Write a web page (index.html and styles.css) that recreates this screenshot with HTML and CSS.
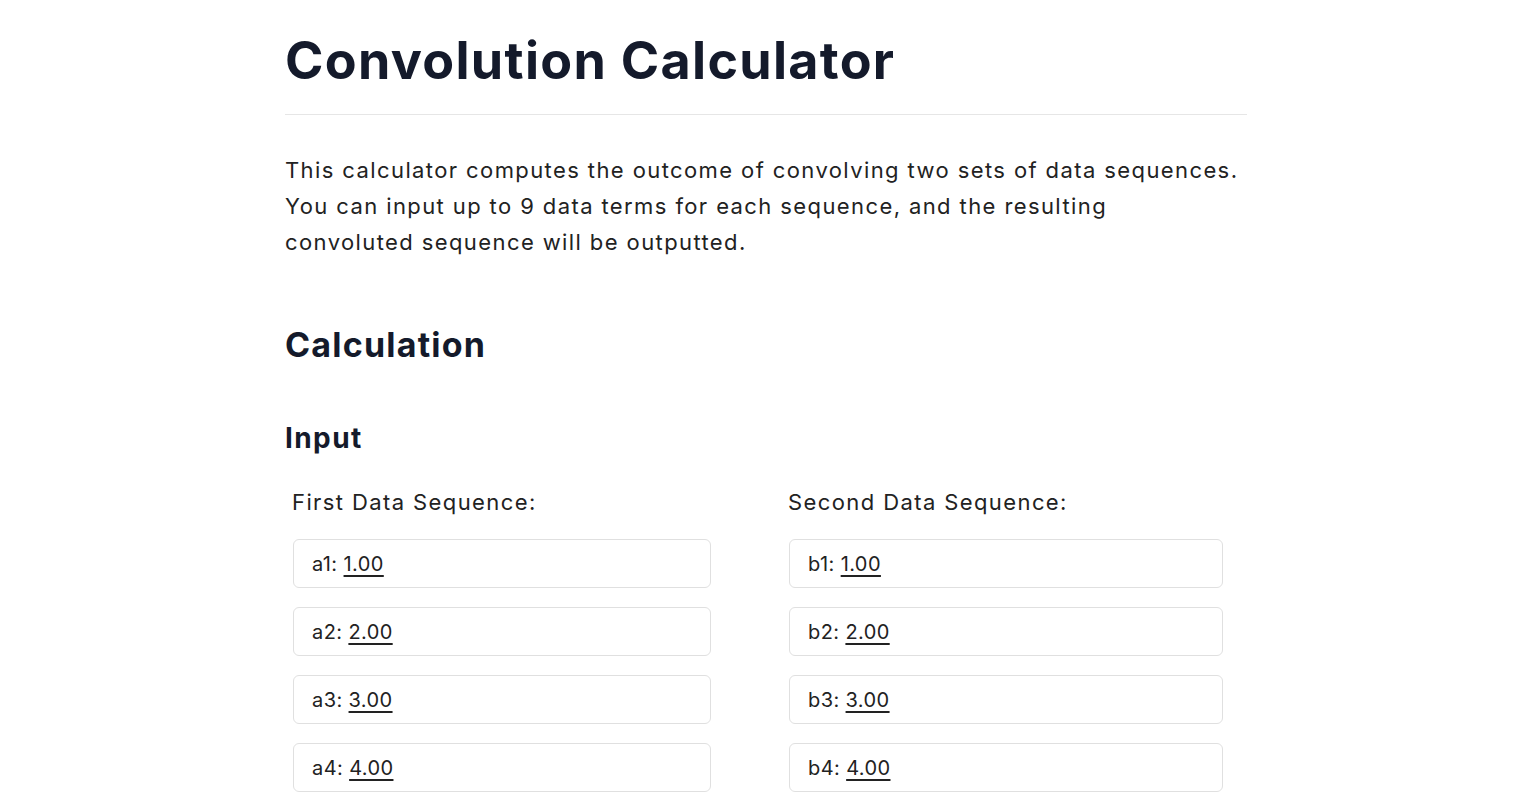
FILE: index.html
```html
<!DOCTYPE html>
<html lang="en">

<head>
    <meta charset="UTF-8">
    <meta name="viewport" content="width=device-width, initial-scale=1.0">
    <title>Convolution Calculator</title>
    <link rel="stylesheet" href="styles.css">
</head>

<body>
    <main class="page">
        <h1 class="title">Convolution Calculator</h1>

        <p class="intro">
            This calculator computes the outcome of convolving two sets of data sequences.
            You can input up to 9 data terms for each sequence, and the resulting<br>
            convoluted sequence will be outputted.
        </p>

        <h2 class="section-title">Calculation</h2>

        <h3 class="sub-title">Input</h3>

        <div class="sequences">
            <div class="sequence first">
                <div class="sequence-label">First Data Sequence:</div>
                <div class="term"><span>a1:</span> <u>1.00</u></div>
                <div class="term"><span>a2:</span> <u>2.00</u></div>
                <div class="term"><span>a3:</span> <u>3.00</u></div>
                <div class="term"><span>a4:</span> <u>4.00</u></div>
            </div>
            <div class="sequence second">
                <div class="sequence-label">Second Data Sequence:</div>
                <div class="term"><span>b1:</span> <u>1.00</u></div>
                <div class="term"><span>b2:</span> <u>2.00</u></div>
                <div class="term"><span>b3:</span> <u>3.00</u></div>
                <div class="term"><span>b4:</span> <u>4.00</u></div>
            </div>
        </div>
    </main>
</body>

</html>
```

FILE: styles.css
```css
body {
    margin: 0;
    font-family: Inter, "Noto Sans", sans-serif;
    background: #fff;
    color: #1f1f1f;
}

.page {
    width: 962px;
    margin-left: 285px;
    padding-top: 29px;
}

.title {
    margin: 0;
    padding-bottom: 22px;
    font-size: 52px;
    font-weight: 700;
    letter-spacing: 1.3px;
    color: #141a2b;
    border-bottom: 1px solid #e6e6e6;
}

.intro {
    margin: 37px 0 0;
    font-size: 22px;
    line-height: 36px;
    letter-spacing: 1.4px;
    color: #222;
}

.section-title {
    margin: 64px 0 0;
    font-size: 34px;
    font-weight: 700;
    letter-spacing: 1.2px;
    color: #141a2b;
}

.sub-title {
    margin: 56px 0 0;
    font-size: 28px;
    font-weight: 700;
    letter-spacing: 1.4px;
    color: #141a2b;
}

.sequences {
    display: flex;
    margin-top: 34px;
}

.sequence {
    display: flex;
    flex-direction: column;
    gap: 19px;
}

.first {
    width: 496px;
    padding-left: 8px;
}

.second {
    width: 434px;
}

.sequence-label {
    margin-left: -1px;
    margin-bottom: 5px;
    font-size: 22px;
    letter-spacing: 1.4px;
    color: #222;
}

.first .term {
    width: 418px;
}

.term {
    box-sizing: border-box;
    height: 49px;
    display: flex;
    align-items: center;
    gap: 6px;
    padding: 0 18px;
    border: 1px solid #e0e0e0;
    border-radius: 6px;
    font-size: 20px;
    letter-spacing: 0.4px;
    color: #222;
}

.term u {
    text-decoration-thickness: 2px;
    text-underline-offset: 4px;
}
```
